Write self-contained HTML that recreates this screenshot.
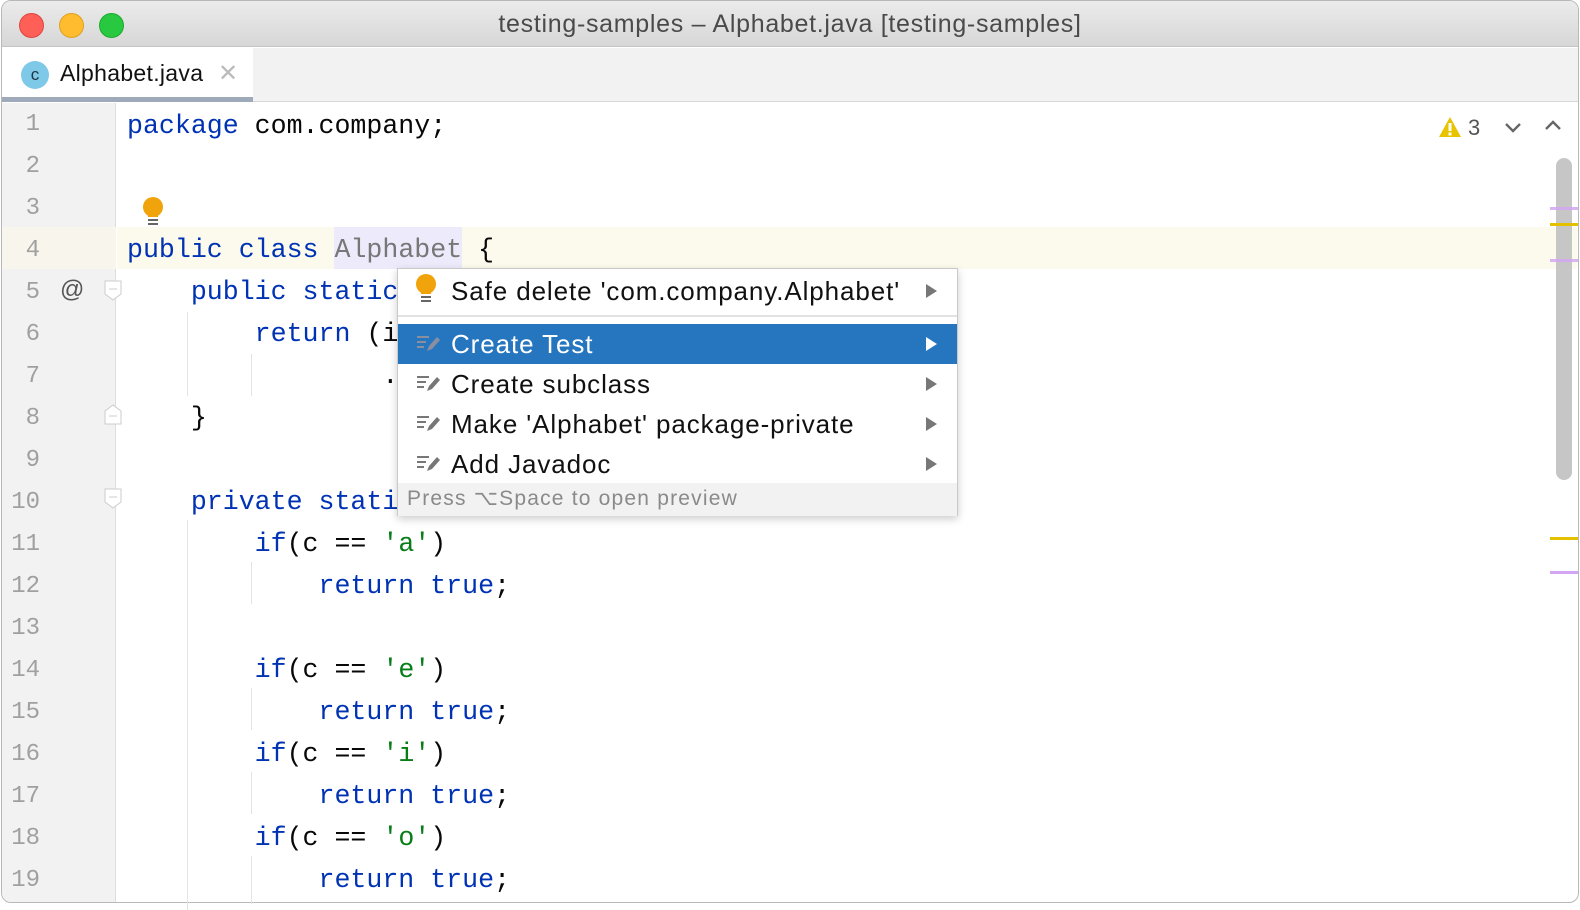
<!DOCTYPE html>
<html><head><meta charset="utf-8"><style>
*{margin:0;padding:0;box-sizing:border-box}
body{width:1580px;height:904px;background:#fff;position:relative;overflow:hidden;font-family:"Liberation Sans",sans-serif}
.abs{position:absolute}
.win{position:absolute;left:1px;top:0;width:1578px;height:903px;border:1px solid #b8b8b8;border-radius:10px;overflow:hidden;background:#fff}
.title{position:absolute;left:0;top:0;width:100%;height:46px;background:linear-gradient(#ebebeb,#d7d7d7);border-bottom:1px solid #c4c4c4}
.tl{position:absolute;top:12px;width:25px;height:25px;border-radius:50%}
.ttext{position:absolute;left:0;right:0;top:9px;text-align:center;font-size:25px;color:#4a4a4a;letter-spacing:0.7px}
.tabs{position:absolute;left:0;top:47px;width:100%;height:54px;background:#f2f2f2;border-bottom:1px solid #d9d9d9}
.tab{position:absolute;left:0;top:0;width:251px;height:54px;background:#fff;border-bottom:5px solid #9ea9b9}
.gutter{position:absolute;left:0;top:102px;width:114px;height:810px;background:#f2f2f2;border-right:1px solid #dedede}
.code{font-family:"Liberation Mono",monospace;font-size:26.6px;color:#080808;white-space:pre}
.ln{position:absolute;left:0;width:40px;text-align:right;font-family:"Liberation Mono",monospace;font-size:24px;color:#a0a0a0;margin-top:3px}
.row{position:absolute;left:127px;height:42px;line-height:42px;margin-top:3px}
.k{color:#0033b3}.s{color:#067d17}
.guide{position:absolute;width:1px;background:#e3e3e3}
.menu{position:absolute;left:397px;top:268px;width:561px;height:248px;background:#fff;border:1px solid #c9c9c9;box-shadow:0 3px 8px rgba(0,0,0,.2);font-size:26px;letter-spacing:0.9px;color:#111}
.mi{position:absolute;left:0;width:100%;height:40px;line-height:40px}
.mi .t{position:absolute;left:53px}
.arr{position:absolute;right:20px;top:13px;width:0;height:0;border-left:11px solid #777;border-top:7px solid transparent;border-bottom:7px solid transparent}
.ic{position:absolute;left:18px;top:10px}
</style></head><body>
<div class="win">
<div class="title">
<div class="tl" style="left:17px;background:#fe5f57;border:1px solid #e0443e"></div>
<div class="tl" style="left:57px;background:#febc2e;border:1px solid #dea123"></div>
<div class="tl" style="left:97px;background:#28c840;border:1px solid #1aab29"></div>
<div class="ttext">testing-samples – Alphabet.java [testing-samples]</div>
</div>
<div class="tabs"><div class="tab">
<div class="abs" style="left:19px;top:13px;width:28px;height:28px;border-radius:50%;background:#7ec8e8;color:#234;font-size:17px;text-align:center;line-height:28px">c</div>
<div class="abs" style="left:58px;top:12px;font-size:23px;color:#111;letter-spacing:0.3px">Alphabet.java</div>
<div class="abs" style="left:216px;top:11px;font-size:24px;color:#bbb">✕</div>
</div></div>
<div class="gutter"></div>
<div class="abs" style="left:0;top:226px;width:114px;height:42px;background:#f8f6ec"></div>
<div class="abs" style="left:115px;top:226px;width:1460px;height:42px;background:#fcfaed"></div>
<div class="abs" style="left:332px;top:226px;width:128px;height:42px;background:#edebfb"></div>
</div>
<div class="ln" style="top:108px">1</div><div class="ln" style="top:150px">2</div><div class="ln" style="top:192px">3</div><div class="ln" style="top:234px">4</div><div class="ln" style="top:276px">5</div><div class="ln" style="top:318px">6</div><div class="ln" style="top:360px">7</div><div class="ln" style="top:402px">8</div><div class="ln" style="top:444px">9</div><div class="ln" style="top:486px">10</div><div class="ln" style="top:528px">11</div><div class="ln" style="top:570px">12</div><div class="ln" style="top:612px">13</div><div class="ln" style="top:654px">14</div><div class="ln" style="top:696px">15</div><div class="ln" style="top:738px">16</div><div class="ln" style="top:780px">17</div><div class="ln" style="top:822px">18</div><div class="ln" style="top:864px">19</div>
<div class="abs" style="left:60px;top:276px;font-size:24px;color:#555">@</div>
<svg class="abs" style="left:104px;top:280px" width="18" height="22"><path d="M1 1H17V14L9 20L1 14Z" fill="#fff" stroke="#ccc"/><path d="M5 9H13" stroke="#ccc"/></svg>
<svg class="abs" style="left:104px;top:403px" width="18" height="22"><path d="M1 21H17V8L9 2L1 8Z" fill="#fff" stroke="#ccc"/><path d="M5 13H13" stroke="#ccc"/></svg>
<svg class="abs" style="left:104px;top:488px" width="18" height="22"><path d="M1 1H17V14L9 20L1 14Z" fill="#fff" stroke="#ccc"/><path d="M5 9H13" stroke="#ccc"/></svg>
<div class="guide" style="left:187px;top:312px;height:84px"></div>
<div class="guide" style="left:251px;top:354px;height:42px"></div>
<div class="guide" style="left:187px;top:520px;height:390px"></div>
<div class="guide" style="left:251px;top:562px;height:42px"></div>
<div class="guide" style="left:251px;top:688px;height:42px"></div>
<div class="guide" style="left:251px;top:772px;height:42px"></div>
<div class="guide" style="left:251px;top:856px;height:48px"></div>
<div class="code">
<div class="row" style="top:102px"><span class="k">package</span> com.company;</div>
<div class="row" style="top:226px"><span class="k">public class</span> <span style="color:#777">Alphabet</span> {</div>
<div class="row" style="top:268px">    <span class="k">public static</span></div>
<div class="row" style="top:310px">        <span class="k">return</span> (i</div>
<div class="row" style="top:352px">                .</div>
<div class="row" style="top:394px">    }</div>
<div class="row" style="top:478px">    <span class="k">private stati</span></div>
<div class="row" style="top:520px">        <span class="k">if</span>(c == <span class="s">'a'</span>)</div>
<div class="row" style="top:562px">            <span class="k">return true</span>;</div>
<div class="row" style="top:646px">        <span class="k">if</span>(c == <span class="s">'e'</span>)</div>
<div class="row" style="top:688px">            <span class="k">return true</span>;</div>
<div class="row" style="top:730px">        <span class="k">if</span>(c == <span class="s">'i'</span>)</div>
<div class="row" style="top:772px">            <span class="k">return true</span>;</div>
<div class="row" style="top:814px">        <span class="k">if</span>(c == <span class="s">'o'</span>)</div>
<div class="row" style="top:856px">            <span class="k">return true</span>;</div>
</div>
<svg class="abs" style="left:142px;top:197px" width="22" height="30"><circle cx="11" cy="10" r="10" fill="#f0a30a"/><rect x="6" y="14" width="10" height="6" fill="#f0a30a"/><path d="M6 23H16M6 27H16" stroke="#666" stroke-width="2"/></svg>
<svg class="abs" style="left:1438px;top:116px" width="24" height="22"><path d="M12 1L23 21H1Z" fill="#e8c400"/><rect x="10.5" y="7" width="3" height="8" fill="#fff"/><rect x="10.5" y="16.5" width="3" height="3" fill="#fff"/></svg>
<div class="abs" style="left:1468px;top:115px;font-size:22px;color:#555">3</div>
<svg class="abs" style="left:1503px;top:120px" width="20" height="14"><path d="M3 4L10 11L17 4" fill="none" stroke="#666" stroke-width="2.4"/></svg>
<svg class="abs" style="left:1543px;top:118px" width="20" height="14"><path d="M3 11L10 4L17 11" fill="none" stroke="#666" stroke-width="2.4"/></svg>
<div class="abs" style="left:1556px;top:158px;width:16px;height:322px;border-radius:8px;background:#c6c6c6"></div>
<div class="abs" style="left:1550px;top:207px;width:28px;height:3px;background:#d3a6f3;opacity:.85"></div>
<div class="abs" style="left:1550px;top:223px;width:28px;height:3px;background:#e3c000"></div>
<div class="abs" style="left:1550px;top:259px;width:28px;height:3px;background:#d3a6f3;opacity:.85"></div>
<div class="abs" style="left:1550px;top:537px;width:28px;height:3px;background:#e3c000"></div>
<div class="abs" style="left:1550px;top:571px;width:28px;height:3px;background:#d3a6f3"></div>
<div class="menu">
<div class="mi" style="top:2px"><svg class="ic" style="left:17px;top:3px" width="22" height="32"><circle cx="11" cy="10" r="10" fill="#f0a30a"/><rect x="6" y="14" width="10" height="6" fill="#f0a30a"/><path d="M6 23H16M6 27H16" stroke="#666" stroke-width="2"/></svg><span class="t">Safe delete 'com.company.Alphabet'</span><div class="arr"></div></div>
<div class="abs" style="left:0;top:46px;width:100%;height:2px;background:#e2e2e2"></div>
<div class="mi" style="top:55px;background:#2675bf;color:#fff"><svg class="ic" width="26" height="20"><path d="M1 3H13M1 8H10M1 13H8" stroke="#8a8fa0" stroke-width="2"/><path d="M11 17L13 12L21 3L24 6L16 15Z" fill="#8a8fa0"/></svg><span class="t">Create Test</span><div class="arr" style="border-left-color:#fff"></div></div>
<div class="mi" style="top:95px"><svg class="ic" width="26" height="20"><path d="M1 3H13M1 8H10M1 13H8" stroke="#777" stroke-width="2"/><path d="M11 17L13 12L21 3L24 6L16 15Z" fill="#777"/></svg><span class="t">Create subclass</span><div class="arr"></div></div>
<div class="mi" style="top:135px"><svg class="ic" width="26" height="20"><path d="M1 3H13M1 8H10M1 13H8" stroke="#777" stroke-width="2"/><path d="M11 17L13 12L21 3L24 6L16 15Z" fill="#777"/></svg><span class="t">Make 'Alphabet' package-private</span><div class="arr"></div></div>
<div class="mi" style="top:175px"><svg class="ic" width="26" height="20"><path d="M1 3H13M1 8H10M1 13H8" stroke="#777" stroke-width="2"/><path d="M11 17L13 12L21 3L24 6L16 15Z" fill="#777"/></svg><span class="t">Add Javadoc</span><div class="arr"></div></div>
<div class="abs" style="left:0;top:214px;width:100%;height:33px;background:#f2f2f2;color:#8a8a8a;font-size:21px;letter-spacing:1.2px;line-height:32px;padding-left:9px">Press ⌥Space to open preview</div>
</div>
</body></html>
